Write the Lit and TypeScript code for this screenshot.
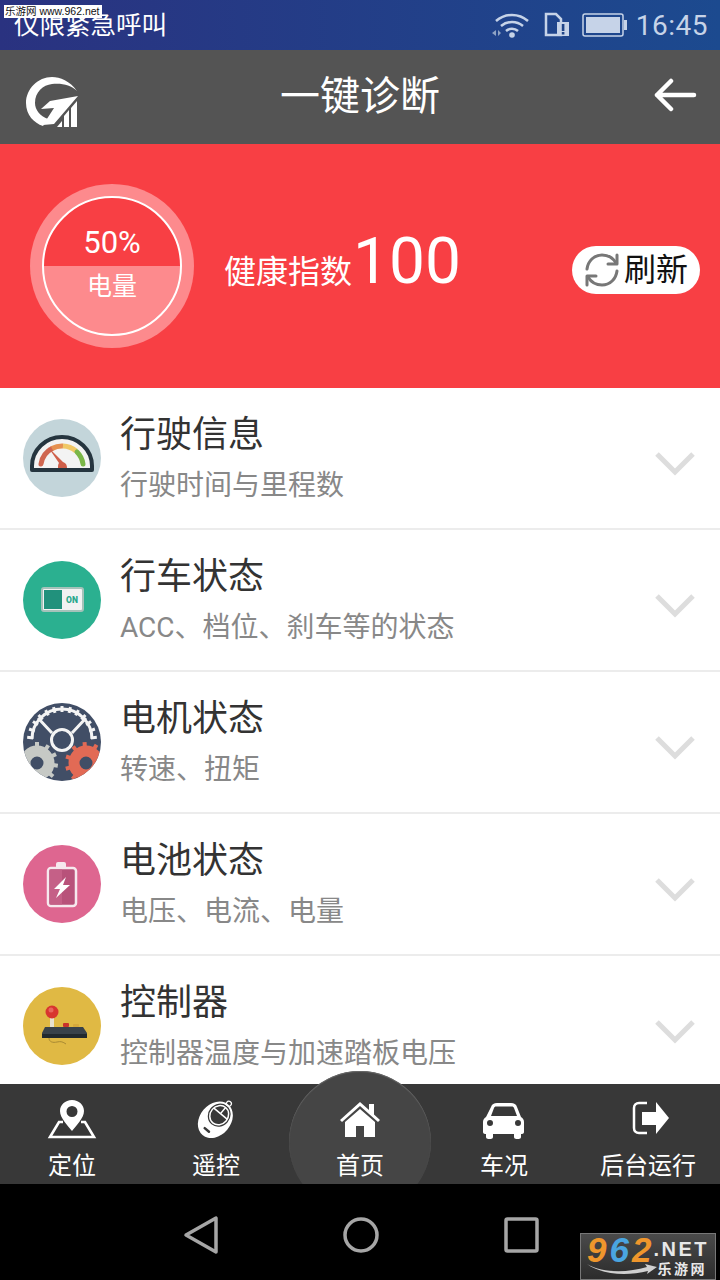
import { LitElement, css, html, svg } from "lit";
import { customElement } from "lit/decorators.js";

const teeth = (cx: number, cy: number, r1: number, r2: number, from: number, to: number, n: number) => {
  const out = [];
  for (let i = 0; i < n; i++) {
    const a = ((from + ((to - from) * i) / (n - 1)) * Math.PI) / 180;
    out.push(svg`<line x1=${cx + r1 * Math.cos(a)} y1=${cy + r1 * Math.sin(a)} x2=${cx + r2 * Math.cos(a)} y2=${cy + r2 * Math.sin(a)}/>`);
  }
  return out;
};

const gaugeIcon = html`<svg viewBox="0 0 78 78" width="78" height="78">
  <circle cx="39" cy="39" r="39" fill="#c3d5da"/>
  <path d="M9 51v-4a30 29 0 0 1 60 0v4z" fill="#f3f3f3" stroke="#25353f" stroke-width="4" stroke-linejoin="round"/>
  <g fill="none" stroke-width="5">
    <path d="M18 45A21 21 0 0 1 29 29.500" stroke="#cf6650" stroke-linecap="round"/>
    <path d="M29 29.500A21 21 0 0 1 40 27" stroke="#e59050"/>
    <path d="M40 27A21 21 0 0 1 53 32" stroke="#f0c866"/>
    <path d="M54 33A21 21 0 0 1 60 45" stroke="#7ab648" stroke-linecap="round"/>
  </g>
  <path d="M25 28l15 15c3 1 4 3 4 6h-9c0-2 0-4 1-5z" fill="#cf5f4a"/>
</svg>`;

const switchIcon = html`<svg viewBox="0 0 78 78" width="78" height="78">
  <circle cx="39" cy="39" r="39" fill="#2bb090"/>
  <rect x="19" y="27" width="41" height="23" rx="2" fill="#f2f2f2" stroke="#a5c2ba" stroke-width="2"/>
  <rect x="21" y="29" width="18" height="19" fill="#21917c"/>
  <text x="49" y="42" text-anchor="middle" font-family="Roboto, sans-serif" font-size="8.500" font-weight="900" fill="#2aa88c">ON</text>
</svg>`;

const gearIcon = html`<svg viewBox="0 0 78 78" width="78" height="78">
  <defs><clipPath id="gear-clip"><circle cx="39" cy="39" r="39"/></clipPath></defs>
  <g clip-path="url(#gear-clip)">
    <rect width="78" height="78" fill="#414e66"/>
    <g fill="none" stroke="#f4f4f4" stroke-width="3">
      <circle cx="39" cy="37" r="10.500"/>
      <path d="M9 36a30 30 0 0 1 60 0"/>
      <path d="M29 30L15 15M49 30l14-15"/>
      ${teeth(39, 38, 29, 35, 186, 354, 13)}
    </g>
    <circle cx="14" cy="60" r="12" fill="none" stroke="#c6c9c5" stroke-width="11"/>
    <g stroke="#c6c9c5" stroke-width="4">${teeth(14, 60, 16, 21, -90, 40, 5)}</g>
    <circle cx="63" cy="60" r="12" fill="none" stroke="#e26a55" stroke-width="11"/>
    <g stroke="#e26a55" stroke-width="4">${teeth(63, 60, 16, 21, 130, 300, 6)}</g>
  </g>
</svg>`;

const batteryIcon = html`<svg viewBox="0 0 78 78" width="78" height="78">
  <circle cx="39" cy="39" r="39" fill="#de6690"/>
  <rect x="33" y="17" width="10" height="7" rx="2" fill="#f6e9ee"/>
  <rect x="25" y="23" width="28" height="38" rx="3" fill="#b8527a" stroke="#f6e9ee" stroke-width="2.500"/>
  <rect x="26.500" y="24.500" width="12.500" height="35" fill="#c56087"/>
  <path d="M43 32L31 44h6l-4 9 14-13h-7l3-8z" fill="#fff"/>
</svg>`;

const joystickIcon = html`<svg viewBox="0 0 78 78" width="78" height="78">
  <circle cx="39" cy="39" r="39" fill="#e0b944"/>
  <rect x="27" y="29" width="4" height="12" fill="#e8e2cf"/>
  <circle cx="29" cy="25" r="6.500" fill="#d8352f"/>
  <circle cx="28" cy="23" r="2.500" fill="#e8655c"/>
  <rect x="40" y="36" width="6" height="4" rx="1" fill="#c9332b"/>
  <rect x="50" y="37" width="6" height="3" rx="1" fill="#d6a93c"/>
  <path d="M22 40h38l4 6v5H19v-5z" fill="#39424a"/>
  <rect x="19" y="47" width="45" height="4" fill="#22292e"/>
  <path d="M26 51c0 4 4 5 8 4s6 0 9 2" fill="none" stroke="#a98a33"/>
</svg>`;

const pinIcon = html`<svg viewBox="0 0 50 40" width="50" height="40">
  <path d="M25 1c-7 0-12 5-12 11 0 7 8 15 12 20 4-5 12-13 12-20 0-6-5-11-12-11zm0 6a5.500 5.500 0 1 1 0 11 5.500 5.500 0 0 1 0-11z" fill="#fff" fill-rule="evenodd"/>
  <path d="M16 23h-4L3 38h44l-9-15h-4" fill="none" stroke="#fff" stroke-width="2.600"/>
</svg>`;

const remoteIcon = html`<svg viewBox="0 0 50 40" width="50" height="40">
  <g transform="rotate(40 25 20)">
    <ellipse cx="25" cy="21" rx="15.500" ry="20" fill="#fff"/>
    <ellipse cx="25" cy="15" rx="11" ry="12" fill="#383838"/>
    <ellipse cx="25" cy="15" rx="9" ry="10" fill="none" stroke="#fff" stroke-width="1.500"/>
    <path d="M16 13h18M25 13V5" stroke="#fff" stroke-width="1.500"/>
    <rect x="21" y="33" width="8" height="2.500" rx="1.200" fill="#383838"/>
    <circle cx="25" cy="0" r="2.500" fill="none" stroke="#fff" stroke-width="1.200"/>
  </g>
</svg>`;

const houseIcon = html`<svg viewBox="0 0 50 40" width="50" height="40">
  <path d="M25 3L5 21l2 2L25 7l18 16 2-2-6-5.500V5h-5v6z" fill="#fff"/>
  <path d="M25 10L10 23v15h11V27h8v11h11V23z" fill="#fff"/>
</svg>`;

const carIcon = html`<svg viewBox="0 0 50 40" width="50" height="40">
  <path d="M12 8c1-3 3-4 6-4h14c3 0 5 1 6 4l4 10c2 1 3 3 3 5v10c0 1-1 2-2 2h-1v3c0 1-1 2-2.500 2h-2c-1.500 0-2.500-1-2.500-2v-3H14v3c0 1-1 2-2.500 2h-2C8 40 7 39 7 38v-3H6c-1 0-2-1-2-2V23c0-2 1-4 3-5zm3 1l-3 8h26l-3-8c-.5-1-1-1.500-2-1.500H17c-1 0-1.500.500-2 1.500zM11 21a3 3 0 1 0 0 6 3 3 0 0 0 0-6zm28 0a3 3 0 1 0 0 6 3 3 0 0 0 0-6z" fill="#fff" fill-rule="evenodd"/>
</svg>`;

const exitIcon = html`<svg viewBox="0 0 50 40" width="50" height="40">
  <path d="M24 4h-8c-3 0-5 2-5 5v20c0 3 2 5 5 5h8" fill="none" stroke="#fff" stroke-width="2.500"/>
  <path d="M33 3l13 16-13 16v-9H19V13h14z" fill="#fff"/>
</svg>`;

const rows = [
  { title: "行驶信息", sub: "行驶时间与里程数", icon: gaugeIcon },
  { title: "行车状态", sub: "ACC、档位、刹车等的状态", icon: switchIcon },
  { title: "电机状态", sub: "转速、扭矩", icon: gearIcon },
  { title: "电池状态", sub: "电压、电流、电量", icon: batteryIcon },
  { title: "控制器", sub: "控制器温度与加速踏板电压", icon: joystickIcon },
];

const tabs = [
  { label: "定位", icon: pinIcon },
  { label: "遥控", icon: remoteIcon },
  { label: "首页", icon: houseIcon },
  { label: "车况", icon: carIcon },
  { label: "后台运行", icon: exitIcon },
];

@customElement("app-root")
export class AppRoot extends LitElement {
  static styles = css`
    :host {
      display: flex;
      flex-direction: column;
      position: relative;
      width: 720px;
      height: 1280px;
      overflow: hidden;
      background: #fff;
      font-family: Roboto, "Noto Sans CJK SC", sans-serif;
    }

    svg { display: block; }

    .status {
      flex: none;
      height: 50px;
      display: flex;
      align-items: center;
      padding: 0 12px 0 14px;
      background: linear-gradient(90deg, #2a3280, #1c4a8f);
      color: #fff;
    }
    .status-title { flex: 1; font-size: 25.500px; line-height: 50px; }
    .status-icons { display: flex; align-items: center; gap: 12px; }
    .wifi { margin-right: 2px; }
    .clock { font-size: 28px; color: #c6d3e8; letter-spacing: 0.500px; margin-left: -4px; }

    .site-tag {
      position: absolute;
      left: 4px;
      top: 5px;
      width: 98px;
      height: 13px;
      background: #fff;
      color: #111;
      font: 10.500px/13px "Liberation Sans", "Noto Sans CJK SC", sans-serif;
      white-space: nowrap;
      padding-left: 1px;
      box-sizing: border-box;
    }

    .header {
      flex: none;
      height: 94px;
      display: grid;
      grid-template-columns: 1fr auto 1fr;
      align-items: center;
      padding: 0 23px;
      background: #545454;
      color: #fff;
    }
    .logo { margin: 12px 0 0 3px; }
    .back { justify-self: end; margin-bottom: 4px; }
    .header-title { font-size: 40px; line-height: 94px; }

    .hero {
      flex: none;
      height: 244px;
      box-sizing: border-box;
      display: flex;
      align-items: center;
      padding: 0 20px 0 30px;
      background: #f83f44;
      color: #fff;
    }
    .ring {
      flex: none;
      width: 164px;
      height: 164px;
      box-sizing: border-box;
      padding: 12px;
      border-radius: 50%;
      background: #fd8a8d;
    }
    .ring-inner {
      height: 100%;
      box-sizing: border-box;
      border: 2px solid #fff;
      border-radius: 50%;
      background: linear-gradient(#f83f44 50%, #fd8a8d 50%);
      display: flex;
      flex-direction: column;
      align-items: center;
      padding-top: 25px;
    }
    .pct { font-size: 31px; line-height: 40px; }
    .ring-label { font-size: 25px; line-height: 36px; margin-top: 6px; }
    .health { display: flex; align-items: center; margin-left: 30px; flex: 1; }
    .health-label { font-size: 32px; line-height: 44px; padding-top: 12px; }
    .health-value { font-size: 64px; line-height: 80px; margin-left: 1px; margin-top: -8px; }
    .refresh {
      display: flex;
      align-items: center;
      gap: 4px;
      height: 48px;
      width: 128px;
      box-sizing: border-box;
      padding-left: 12px;
      border-radius: 24px;
      background: #fff;
      color: #111;
      font-size: 32px;
      margin-top: 8px;
    }
    .refresh span { margin-top: -6px; }

    .list { flex: 1; min-height: 0; overflow: hidden; }
    .row {
      height: 142px;
      box-sizing: border-box;
      border-bottom: 2px solid #ececec;
      display: flex;
      align-items: center;
      padding: 0 24px 0 23px;
    }
    .row-icon { flex: none; margin-right: 19px; }
    .row-text { flex: 1; min-width: 0; display: flex; flex-direction: column; }
    .row-title { font-size: 36px; line-height: 50px; color: #333; }
    .row-sub { font-size: 28px; line-height: 40px; color: #888; margin-top: 6px; }
    .chevron { margin-top: 12px; }

    .tabs {
      flex: none;
      height: 100px;
      display: grid;
      grid-template-columns: repeat(5, 1fr);
      background: #383838;
      position: relative;
    }
    .home-bump {
      position: absolute;
      left: 289px;
      top: -13px;
      width: 142px;
      height: 142px;
      border-radius: 50%;
      background: #454545;
      box-shadow: inset 0 1px 1px #6a6a6a;
    }
    .tab {
      position: relative;
      display: flex;
      flex-direction: column;
      align-items: center;
      padding-top: 15px;
      color: #fff;
    }
    .tab-label { font-size: 24px; line-height: 36px; margin-top: 9px; white-space: nowrap; }

    .nav {
      flex: none;
      height: 96px;
      position: relative;
      z-index: 1;
      box-sizing: border-box;
      padding: 31px 0 0 121px;
      display: grid;
      grid-template-columns: repeat(3, 160px);
      justify-items: center;
      align-content: start;
      background: #000;
    }

    .brand {
      position: absolute;
      right: 4px;
      bottom: 0;
      width: 136px;
      height: 47px;
      box-sizing: border-box;
      border: 1px solid #777;
      background: linear-gradient(#4a4a4a, #2c2c2c);
      font-family: "Liberation Sans", "Noto Sans CJK SC", sans-serif;
      display: flex;
      padding: 0 0 0 6px;
    }
    .brand-num { font-size: 35px; line-height: 32px; font-weight: 700; font-style: italic; letter-spacing: 3px; }
    .n1, .n3 { color: #ef962c; }
    .n2 { color: #4aa5e0; }
    .brand-side { color: #e8e8e8; font-weight: 700; margin-left: -1px; }
    .brand-net { font-size: 20px; line-height: 20px; letter-spacing: 2.500px; margin-top: 5px; white-space: nowrap; }
    .brand-cn { font-size: 14px; line-height: 16px; letter-spacing: 2.500px; margin-top: 2px; white-space: nowrap; padding-left: 4px; }
    .brand-swoosh { position: absolute; left: 6px; bottom: 3px; }
  `;

  render() {
    return html`
      <div class="status">
        <div class="status-title">仪限紧急呼叫</div>
        <div class="status-icons">
          <svg class="wifi" viewBox="0 0 38 26" width="38" height="26">
            <g fill="none" stroke="#c6d3e8" stroke-width="2.500">
              <path d="M4 9a24 24 0 0 1 32 0"/>
              <path d="M9 14a17 17 0 0 1 22 0"/>
              <path d="M14 19a9 9 0 0 1 12 0"/>
            </g>
            <circle cx="20" cy="23" r="2.800" fill="#c6d3e8"/>
            <path d="M0 21l4-3v6zM6 18l3 3-3 3z" fill="#8fa3c4"/>
          </svg>
          <svg viewBox="0 0 26 26" width="26" height="26">
            <path d="M2 2h10l5 5v16H2z" fill="none" stroke="#c6d3e8" stroke-width="2.500"/>
            <path d="M13 10h12v14H13z" fill="#c6d3e8"/>
            <rect x="17.800" y="12" width="2.600" height="7" fill="#1f4488"/>
            <rect x="17.800" y="20" width="2.600" height="2.500" fill="#1f4488"/>
          </svg>
          <svg viewBox="0 0 46 24" width="46" height="24">
            <rect x="1" y="1" width="40" height="22" rx="2" fill="none" stroke="#c6d3e8" stroke-width="1.500"/>
            <rect x="4" y="4" width="34" height="16" fill="#c6d3e8"/>
            <rect x="42" y="7" width="3" height="10" fill="#c6d3e8"/>
          </svg>
          <div class="clock">16:45</div>
        </div>
      </div>
      <div class="site-tag">乐游网 www.962.net</div>

      <div class="header">
        <svg class="logo" viewBox="26 78 54 52" width="54" height="52">
          <path d="M77 92C70 82 60 78 52 78 38 78 26 90 26 104c0 12 8 20 17 23l5-7c-8-3-13-9-13-16 0-11 8-18 17-19 10-1 19 1 25 7z" fill="#fff"/>
          <path d="M78 97L50 102l-9 8 13-1-11 17 11-1z" fill="#fff"/>
          <path d="M57 128l5-6v6zM64 128v-11l5-6v17zM71 128v-19l6-7v26z" fill="#fff"/>
        </svg>
        <div class="header-title">一键诊断</div>
        <svg class="back" viewBox="0 0 44 34" width="44" height="34">
          <path d="M41 17H4M18 3L4 17l14 14" fill="none" stroke="#fff" stroke-width="4.500" stroke-linecap="round" stroke-linejoin="round"/>
        </svg>
      </div>

      <div class="hero">
        <div class="ring">
          <div class="ring-inner">
            <div class="pct">50%</div>
            <div class="ring-label">电量</div>
          </div>
        </div>
        <div class="health">
          <div class="health-label">健康指数</div>
          <div class="health-value">100</div>
        </div>
        <div class="refresh">
          <svg viewBox="0 0 36 36" width="36" height="36">
            <g fill="none" stroke="#777" stroke-width="3" stroke-linecap="round" stroke-linejoin="round">
              <path d="M3 17C4 9 10 3 18 3c6 0 11 3 14 8"/>
              <path d="M33 3v9h-9"/>
              <path d="M33 19c-1 8-7 14-15 14-6 0-11-3-14-8"/>
              <path d="M3 33v-9h9"/>
            </g>
          </svg>
          <span>刷新</span>
        </div>
      </div>

      <div class="list">
        ${rows.map(
          (r) => html`
            <div class="row">
              <div class="row-icon">${r.icon}</div>
              <div class="row-text">
                <div class="row-title">${r.title}</div>
                <div class="row-sub">${r.sub}</div>
              </div>
              <svg class="chevron" viewBox="0 0 42 28" width="42" height="28">
                <path d="M3 4l18 18L39 4" fill="none" stroke="#ddd" stroke-width="5"/>
              </svg>
            </div>
          `
        )}
      </div>

      <div class="tabs">
        <div class="home-bump"></div>
        ${tabs.map(
          (t) => html`
            <div class="tab">
              ${t.icon}
              <div class="tab-label">${t.label}</div>
            </div>
          `
        )}
      </div>

      <div class="nav">
        <svg viewBox="0 0 40 40" width="40" height="40">
          <path d="M35 3v34L5 20z" fill="none" stroke="#a6a6a6" stroke-width="3.500" stroke-linejoin="round"/>
        </svg>
        <svg viewBox="0 0 40 40" width="40" height="40">
          <circle cx="20" cy="20" r="16" fill="none" stroke="#a6a6a6" stroke-width="3.500"/>
        </svg>
        <svg viewBox="0 0 40 40" width="40" height="40">
          <rect x="5" y="4" width="31" height="32" rx="1.500" fill="none" stroke="#a6a6a6" stroke-width="3.500"/>
        </svg>
        <div class="brand">
          <div class="brand-num"><span class="n1">9</span><span class="n2">6</span><span class="n3">2</span></div>
          <div class="brand-side">
            <div class="brand-net">.NET</div>
            <div class="brand-cn">乐游网</div>
          </div>
          <svg class="brand-swoosh" viewBox="0 0 70 14" width="70" height="14">
            <path d="M0 2c15 9 40 9 60 3l-2-3 12 3-10 7 1-3C40 14 15 13 0 2z" fill="#d0d0d0"/>
          </svg>
        </div>
      </div>
    `;
  }
}
